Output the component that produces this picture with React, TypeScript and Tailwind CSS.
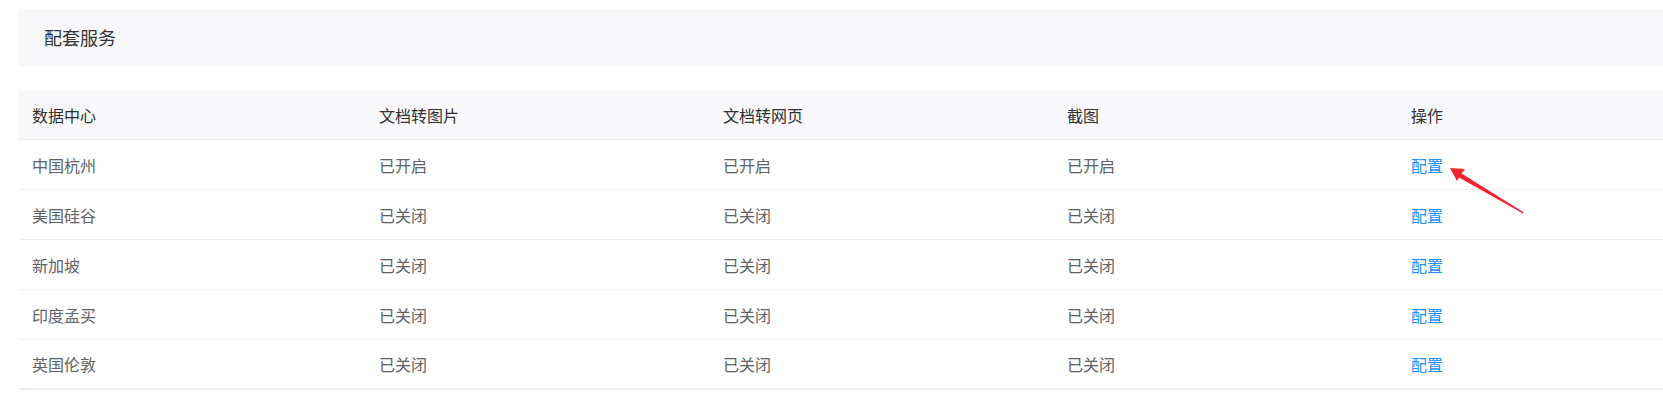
import React from "react";

const rows = [
  ["中国杭州", "已开启", "已开启", "已开启"],
  ["美国硅谷", "已关闭", "已关闭", "已关闭"],
  ["新加坡", "已关闭", "已关闭", "已关闭"],
  ["印度孟买", "已关闭", "已关闭", "已关闭"],
  ["英国伦敦", "已关闭", "已关闭", "已关闭"],
];

const headers = ["数据中心", "文档转图片", "文档转网页", "截图", "操作"];

export default function App() {
  return (
    <div
      className="relative w-full h-[403px] bg-white pt-[9px] pl-[19px] overflow-hidden"
      style={{ fontFamily: '"Microsoft YaHei", "Noto Sans CJK SC", "Noto Sans", sans-serif' }}
    >
      <div className="h-[57px] bg-[#f8f8fa] flex items-center pl-[25px] text-[18px] text-[#333333]">
        配套服务
      </div>
      <div className="mt-[25px]">
        <div className="grid grid-cols-[347px_344px_344px_344px_1fr] h-[49px] bg-[#f8f8fa] border-b border-[#ebeef5] text-[16px] text-[#303133]">
          {headers.map((h) => (
            <div key={h} className="flex items-center pl-[13px]">
              {h}
            </div>
          ))}
        </div>
        {rows.map((r, i) => (
          <div
            key={r[0]}
            className={
              "grid grid-cols-[347px_344px_344px_344px_1fr] h-[50px] text-[16px] text-[#606266] " +
              (i === rows.length - 1 ? "border-b-2 border-[#ebeef5]" : "border-b border-[#ebeef5]")
            }
          >
            {r.map((c, j) => (
              <div key={j} className="flex items-center pl-[13px]">
                {c}
              </div>
            ))}
            <div className="flex items-center pl-[13px] text-[#1890ff]">配置</div>
          </div>
        ))}
      </div>
      <svg className="absolute left-0 top-0 pointer-events-none" width="1663" height="403">
        <polygon
          points="1450,168 1465,169 1461.5,173.5 1524,212.5 1523,213.5 1459,177.5 1457,181"
          fill="#f5222d"
        />
      </svg>
    </div>
  );
}
